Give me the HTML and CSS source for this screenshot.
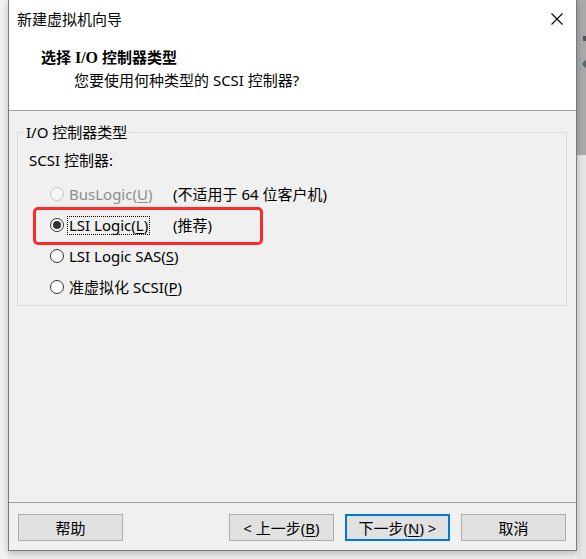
FILE: index.html
```html
<!DOCTYPE html>
<html lang="zh-CN">
<head>
<meta charset="utf-8">
<title>新建虚拟机向导</title>
<link rel="stylesheet" href="styles.css">
</head>
<body>
<div class="screen">
  <div class="left-gap"></div>
  <div class="window">
    <div class="header">
      <div class="titlebar">
        <span class="title">新建虚拟机向导</span>
        <svg class="close" width="12" height="12" viewBox="0 0 12 12"><path d="M0.5 0.5 L11.5 11.5 M11.5 0.5 L0.5 11.5" stroke="#000" stroke-width="1.1" fill="none"/></svg>
      </div>
      <div class="heading">选择 <span class="serif">I/O</span> 控制器类型</div>
      <div class="subheading">您要使用何种类型的 SCSI 控制器?</div>
    </div>
    <div class="content">
      <fieldset class="group">
        <legend>I/O 控制器类型</legend>
        <div class="group-label">SCSI 控制器:</div>
        <div class="option disabled first">
          <span class="radio"></span>
          <span class="opt-text">BusLogic(<u>U</u>)</span>
          <span class="note">(不适用于 64 位客户机)</span>
        </div>
        <div class="option marked">
          <span class="radio checked"></span>
          <span class="opt-text"><span class="focus">LSI Logic(<u>L</u>)</span></span>
          <span class="note">(推荐)</span>
          <span class="annotation"></span>
        </div>
        <div class="option">
          <span class="radio"></span>
          <span class="opt-text wide">LSI Logic SAS(<u>S</u>)</span>
        </div>
        <div class="option">
          <span class="radio"></span>
          <span class="opt-text wide">准虚拟化 SCSI(<u>P</u>)</span>
        </div>
      </fieldset>
      <div class="footer">
        <button class="btn">帮助</button>
        <div class="nav">
          <button class="btn">&lt; 上一步(<u>B</u>)</button>
          <button class="btn default">下一步(<u>N</u>) &gt;</button>
          <button class="btn">取消</button>
        </div>
      </div>
    </div>
  </div>
  <div class="right-strip">
    <span class="mark-square"></span>
    <span class="mark-diamond"></span>
  </div>
</div>
</body>
</html>
```
FILE: styles.css
```css
html, body {
  margin: 0;
  padding: 0;
}
body {
  width: 586px;
  height: 559px;
  overflow: hidden;
  background: #ececec;
  font-family: "Noto Sans", "Noto Sans CJK SC", sans-serif;
  font-size: 15px;
  color: #000;
}
.screen {
  display: flex;
  height: 559px;
  background: #ebebeb;
}
.left-gap {
  width: 8px;
  flex: none;
  background: #f2f2f2;
}
.window {
  width: 569px;
  height: 551px;
  flex: none;
  box-sizing: border-box;
  border-left: 1px solid #7a7a7a;
  border-right: 1px solid #7a7a7a;
  border-bottom: 1px solid #7a7a7a;
  box-shadow: 0 2px 7px rgba(0, 0, 0, 0.22);
  display: flex;
  flex-direction: column;
  position: relative;
  z-index: 1;
}
.header {
  height: 110px;
  flex: none;
  background: #fff;
  border-bottom: 1px solid #a0a0a0;
}
.titlebar {
  height: 38px;
  display: flex;
  align-items: center;
  justify-content: space-between;
  padding: 0 13px 0 8px;
}
.title {
  line-height: 20px;
}
.close {
  display: block;
}
.heading {
  margin-top: 8px;
  padding-left: 32px;
  line-height: 23px;
  font-weight: 700;
}
.serif {
  font-family: "Liberation Serif", serif;
  font-weight: 700;
  font-size: 16px;
}
.subheading {
  padding-left: 65px;
  line-height: 22px;
}
.content {
  flex: 1;
  display: flex;
  flex-direction: column;
  background: #f0f0f0;
}
.group {
  margin: 11px 9px 0 8px;
  padding: 0 0 3px 11px;
  border: 1px solid #dcdcdc;
  min-width: 0;
}
.group legend {
  padding: 0 2px;
  margin-left: -5px;
  line-height: 20px;
}
.group-label {
  margin-top: 8px;
  line-height: 20px;
}
.option {
  position: relative;
  height: 31px;
  display: flex;
  align-items: center;
  padding-left: 21px;
  line-height: 20px;
}
.option.first {
  margin-top: 8px;
}
.radio {
  width: 14px;
  height: 14px;
  flex: none;
  box-sizing: border-box;
  border: 1px solid #333;
  border-radius: 50%;
  background: #fff;
  margin-right: 5px;
  display: flex;
  align-items: center;
  justify-content: center;
}
.radio.checked::after {
  content: "";
  width: 8px;
  height: 8px;
  border-radius: 50%;
  background: #333;
}
.option.disabled .radio {
  border-color: #c4c4c4;
  background: #f7f7f7;
}
.option.disabled .opt-text {
  color: #8e8e8e;
}
.opt-text {
  width: 104px;
  flex: none;
  white-space: nowrap;
}
.opt-text.wide {
  width: auto;
}
.focus {
  display: inline-block;
  margin-left: -1px;
  padding: 0 1px;
  line-height: 17px;
  outline: 1px dotted #000;
}
.note {
  white-space: nowrap;
}
u {
  text-decoration: underline;
  text-underline-offset: 2px;
}
.annotation {
  position: absolute;
  left: 4px;
  top: -2px;
  width: 230px;
  height: 38px;
  box-sizing: border-box;
  border: 3px solid #fb2b2b;
  border-radius: 5px;
  pointer-events: none;
}
.footer {
  margin-top: auto;
  border-top: 1px solid #a0a0a0;
  padding: 11px 10px 9px 9px;
  display: flex;
  justify-content: space-between;
}
.nav {
  display: flex;
  gap: 11px;
}
.btn {
  width: 105px;
  height: 27px;
  box-sizing: border-box;
  border: 1px solid #adadad;
  background: #e1e1e1;
  font-family: "Noto Sans", "Noto Sans CJK SC", sans-serif;
  font-size: 15px;
  line-height: 20px;
  color: #000;
  padding: 0;
  margin: 0;
}
.btn.default {
  border: 2px solid #0078d7;
}
.right-strip {
  width: 9px;
  flex: none;
  height: 559px;
  overflow: hidden;
  background: linear-gradient(to bottom, #a9a9a9 0, #a9a9a9 155px, #e6e6e6 155px, #e6e6e6 100%);
  display: flex;
  flex-direction: column;
  align-items: flex-start;
}
.mark-square {
  width: 4px;
  height: 5px;
  margin: 36px 0 0 6px;
  background: #4a5560;
}
.mark-diamond {
  width: 6px;
  height: 6px;
  margin: 20px 0 0 6px;
  background: #5a6470;
  transform: rotate(45deg);
}
```
